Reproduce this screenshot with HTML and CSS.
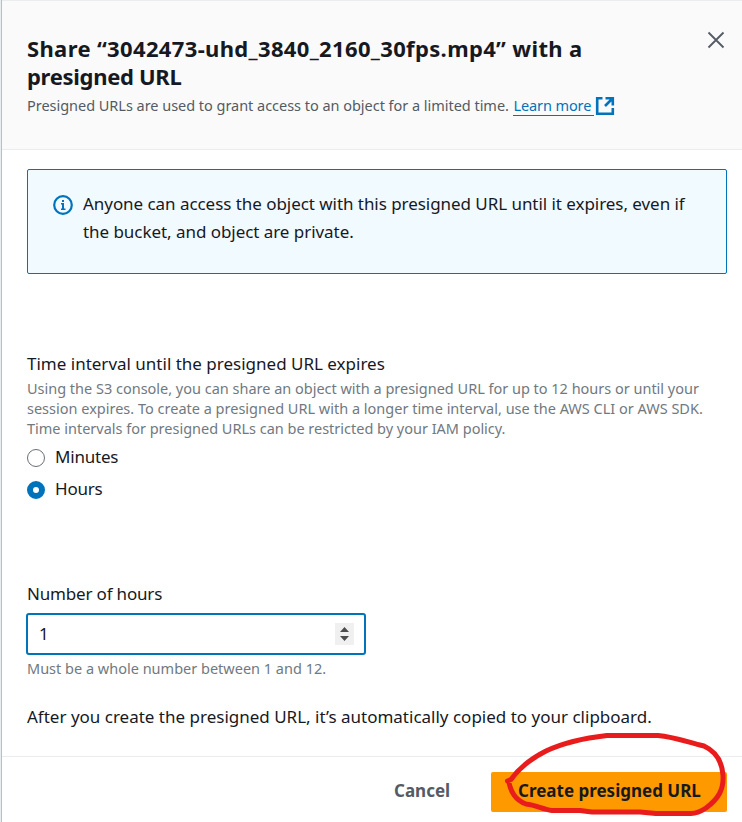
FILE: index.html
```html
<!DOCTYPE html>
<html lang="en">
<head>
<meta charset="utf-8">
<title>Share with a presigned URL</title>
<link rel="stylesheet" href="styles.css">
</head>
<body>
<div class="modal">
  <header class="header">
    <div class="heading">
      <h1 class="title"><span class="line t1">Share “3042473-uhd_3840_2160_30fps.mp4” with a</span><span class="line t2">presigned URL</span></h1>
      <p class="subtitle"><span class="sub">Presigned URLs are used to grant access to an object for a limited time.</span><a class="link">Learn more</a><svg class="external" width="20" height="20" viewBox="0 0 20 20"><path d="M7.500 2.200H2.200v15.600h15.600V12M10.500 2.200h7.300v7.300M17.500 2.500l-7.500 7.500"/></svg></p>
    </div>
    <svg class="close" width="18" height="18" viewBox="0 0 18 18"><path d="M1.500 1.500l15 15M16.500 1.500l-15 15"/></svg>
  </header>
  <main class="content">
    <div class="alert">
      <svg class="info" width="20" height="20" viewBox="0 0 20 20"><circle cx="10" cy="10" r="8.800"/><path class="info-mark" d="M8 8h3v5.500h1.500V15H8v-1.500h1V9.500H8zM9 5h2v2H9z"/></svg>
      <p class="body"><span class="line a1">Anyone can access the object with this presigned URL until it expires, even if</span><span class="line a2">the bucket, and object are private.</span></p>
    </div>
    <section class="interval">
      <div class="label"><span class="l1">Time interval until the presigned URL expires</span></div>
      <p class="hint"><span class="line h1">Using the S3 console, you can share an object with a presigned URL for up to 12 hours or until your</span><span class="line h2">session expires. To create a presigned URL with a longer time interval, use the AWS CLI or AWS SDK.</span><span class="line h3">Time intervals for presigned URLs can be restricted by your IAM policy.</span></p>
      <div class="option"><i class="radio"></i><span class="o1">Minutes</span></div>
      <div class="option"><i class="radio checked"></i><span class="o2">Hours</span></div>
    </section>
    <section class="hours">
      <div class="label"><span class="l2">Number of hours</span></div>
      <div class="field"><span>1</span><svg class="spinner" width="19" height="22" viewBox="0 0 19 22"><path d="M5 9l4.500-5L14 9zM5 13h9l-4.500 5z"/></svg></div>
      <p class="hint"><span class="h4">Must be a whole number between 1 and 12.</span></p>
    </section>
    <p class="note"><span class="n1">After you create the presigned URL, it’s automatically copied to your clipboard.</span></p>
  </main>
  <footer class="footer">
    <span class="cancel">Cancel</span>
    <div class="primary"><span class="create">Create presigned URL</span>
      <svg class="scribble" width="230" height="90" viewBox="500 730 230 90"><path d="M507.500 781L511 779.500C520 767 532 758 546 751C565 742 585 738 607 735.500H658C675 737 687 742 704 746C717 752 722 762 723 775C724 790 718 799 706 808C700 812 695 813.500 691 813.500H656L640 812H592L580 810.500H552C542 809 536 805 526 804C515 800 511 792 508.500 781"/></svg>
    </div>
  </footer>
</div>
</body>
</html>
```
FILE: styles.css
```css
* { box-sizing: border-box; margin: 0; padding: 0; }
body {
  width: 742px;
  height: 822px;
  overflow: hidden;
  background: #eaeded;
  color: #16191f;
  font: 17px/28px "Noto Sans", sans-serif;
}
.modal {
  display: flex;
  flex-direction: column;
  height: 822px;
  margin-left: 1px;
  border-left: 1px solid #b8c0c2;
  background: #fff;
}
.line { display: block; }
span, a { white-space: nowrap; }
svg { flex: none; fill: none; }
.header {
  display: flex;
  justify-content: space-between;
  height: 150px;
  padding: 33px 17px 0 25px;
  border-top: 1px solid #eaeded;
  border-bottom: 1px solid #eaeded;
  background: #fafafa;
}
.title { font-size: 22px; line-height: 28px; }
.t1 { letter-spacing: 0.350px; }
.t2 { letter-spacing: -0.300px; }
.subtitle {
  display: flex;
  margin-top: 5px;
  color: #545b64;
  font-size: 14.5px;
  line-height: 20px;
}
.sub { letter-spacing: -0.030px; }
.link {
  width: 81px;
  height: 21px;
  margin-left: 4.5px;
  border-bottom: 1px solid #0073bb;
  color: #0073bb;
  letter-spacing: -0.1px;
}
.external { margin: 1px 0 0 0.5px; stroke: #0073bb; stroke-width: 2.600; }
.close { margin-top: -3px; stroke: #545b64; stroke-width: 1.8; }
.content { flex: 1; padding: 19px 15px 0 25px; }
.alert {
  display: flex;
  gap: 10px;
  height: 105px;
  padding: 20px 25px;
  border: 1px solid #0073bb;
  border-radius: 2px;
  background: #f1faff;
}
.a1, .a2 { letter-spacing: -0.050px; }
.info { margin-top: 5px; stroke: #0073bb; stroke-width: 2.200; }
.info-mark { fill: #0073bb; stroke: none; }
.interval { margin-top: 76px; }
.label { height: 28px; }
.l2 { letter-spacing: -0.180px; }
.hint {
  color: #717980;
  font-size: 14.5px;
  line-height: 20px;
}
.h1, .h3 { letter-spacing: -0.010px; }
.option { display: flex; gap: 10px; height: 28px; margin-bottom: 4px; }
.interval .hint { margin-bottom: 5px; }
.o1, .o2 { letter-spacing: -0.200px; }
.radio {
  width: 18px;
  height: 18px;
  margin-top: 6px;
  border: 1px solid #687078;
  border-radius: 50%;
}
.radio.checked { border: 6px solid #0073bb; }
.hours { margin-top: 77px; }
.field {
  display: flex;
  align-items: center;
  justify-content: space-between;
  width: 340px;
  height: 42px;
  margin: 5px 0 3px -1px;
  padding: 0 10px 0 11px;
  border: 2px solid #0073bb;
  border-radius: 3px;
}
.spinner { background: #f0f0f0; fill: #4d4d4d; }
.note { margin-top: 25px; }
.footer {
  display: flex;
  justify-content: flex-end;
  align-items: flex-start;
  height: 66px;
  padding: 15px 15px 0 0;
  border-top: 1px solid #eaeded;
  font-weight: 700;
  line-height: 37px;
}
.cancel { width: 97px; color: #545b64; }
.primary {
  position: relative;
  width: 236px;
  height: 40px;
  padding-left: 27px;
  border-radius: 2px;
  background: #ff9900;
}
.scribble {
  position: absolute;
  left: 9px;
  top: -42px;
  stroke: #e81c1c;
  stroke-width: 5;
  stroke-linecap: round;
  stroke-linejoin: round;
}
```
